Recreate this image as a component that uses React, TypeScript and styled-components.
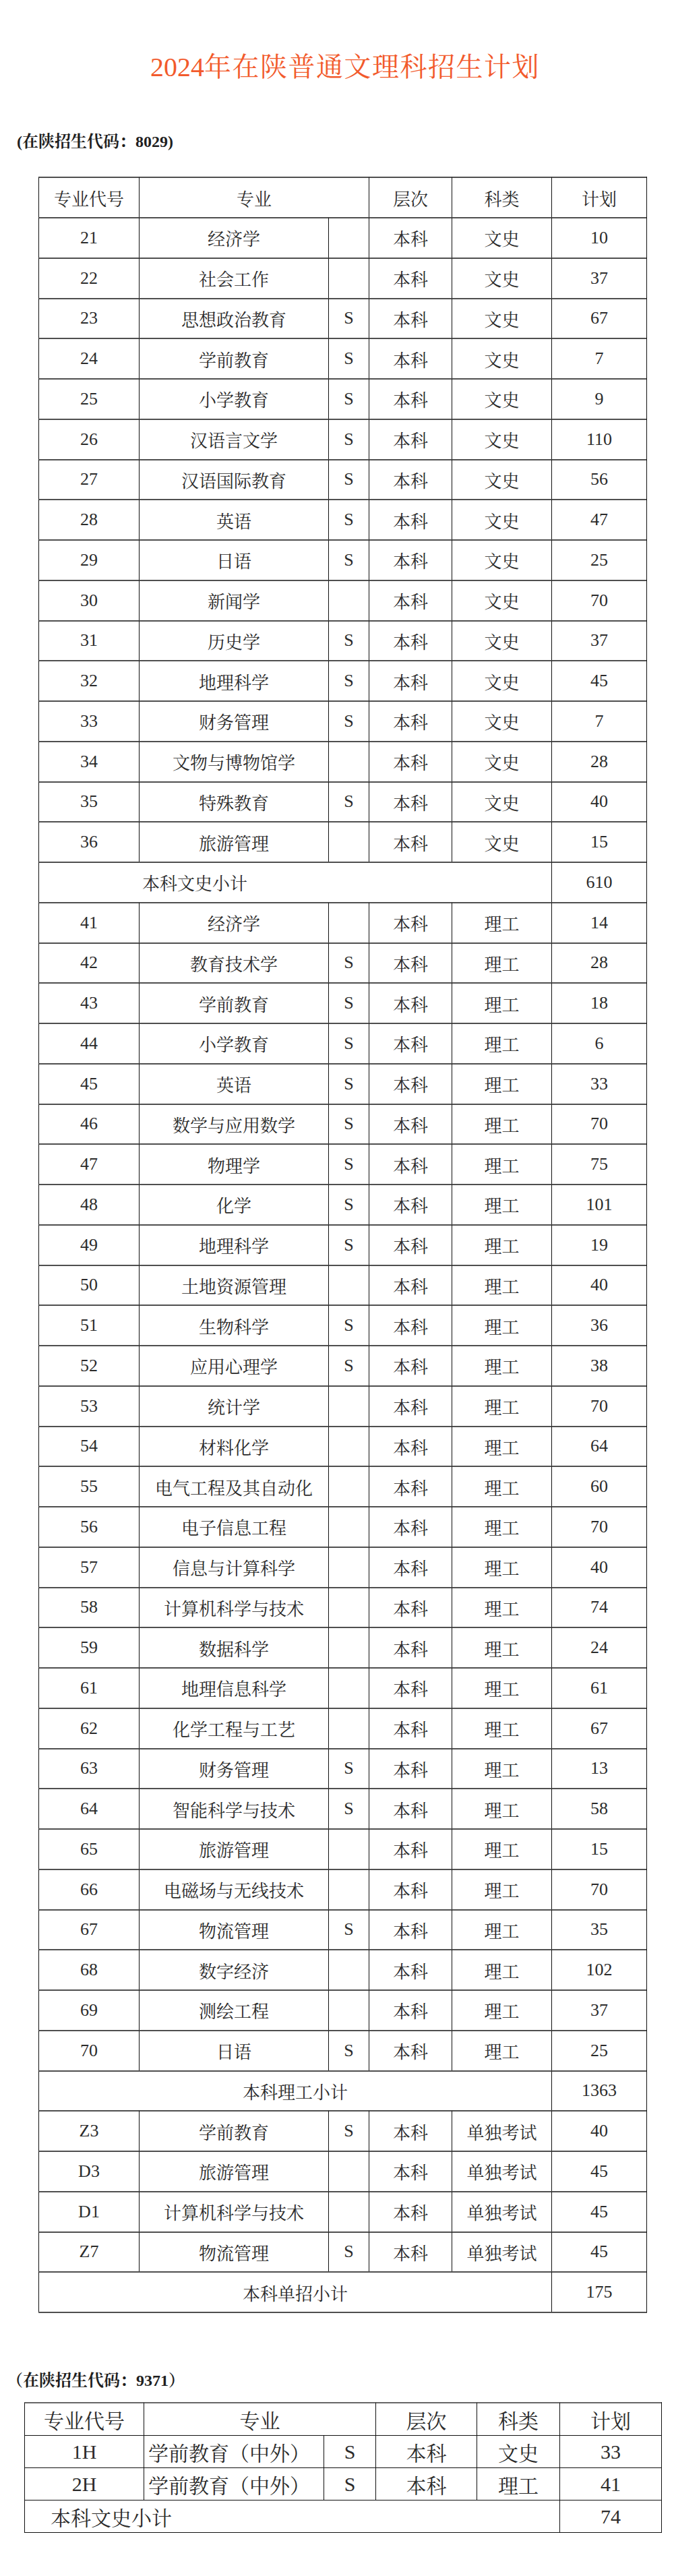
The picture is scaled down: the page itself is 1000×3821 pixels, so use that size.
import React from 'react';
import styled, { createGlobalStyle } from 'styled-components';

const GlobalStyle = createGlobalStyle`
  html, body {
    margin: 0;
    padding: 0;
    background: #ffffff;
  }
  body {
    font-family: "Liberation Serif", "Noto Serif CJK SC", "Noto Sans CJK SC", serif;
    color: #2b2b2b;
  }
`;

const Page = styled.main`
  display: flex;
  flex-direction: column;
  align-items: flex-start;
  width: 1000px;
  min-height: 3821px;
  padding-top: 76px;
  box-sizing: border-box;
`;

const Title = styled.h1`
  align-self: stretch;
  margin: 0;
  padding-left: 24px;
  height: 48px;
  font-size: 40px;
  font-weight: 400;
  line-height: 48px;
  text-align: center;
  white-space: nowrap;
  color: #f25a2c;
`;

const TitleWords = styled.span`
  letter-spacing: 1.5px;
`;

const Caption = styled.p`
  margin: 0;
  font-size: 24px;
  font-weight: 700;
  line-height: 30px;
  white-space: nowrap;
  color: #1f1f1f;
`;

const MainCaption = styled(Caption)`
  margin: 71px 0 0 25px;
`;

const SinoCaption = styled(Caption)`
  margin: 85px 0 0 10px;
`;

const Sheet = styled.div`
  display: grid;
  width: max-content;
  border-right: 1px solid #111;
  color: #2b2b2b;
`;

const LINE1 = '2px solid #4f4f4f';
const LINE2_TOP = '2px solid #666666';
const LINE2 = '1px solid #111111';

const MainSheet = styled(Sheet)`
  grid-template-columns: 149px 281px 60px 123px 148px 141px;
  grid-template-rows: 60px;
  grid-auto-rows: 59.75px;
  margin: 37px 0 0 57px;
  border-bottom: ${LINE1};
  font-size: 26px;
`;

const SinoSheet = styled(Sheet)`
  grid-template-columns: 177px 267px 77px 150px 123px 151px;
  grid-template-rows: 49px;
  grid-auto-rows: 48px;
  margin: 17px 0 0 36px;
  border-bottom: ${LINE2};
  font-size: 30px;
`;

const Cell = styled.div<{ $span?: number; $line: string; $start?: boolean; $pad?: number }>`
  grid-column: span ${(p) => p.$span ?? 1};
  display: flex;
  align-items: center;
  justify-content: ${(p) => (p.$start ? 'flex-start' : 'center')};
  padding-left: ${(p) => p.$pad ?? 0}px;
  box-sizing: border-box;
  border-left: 1px solid #111;
  border-top: ${(p) => p.$line};
  white-space: nowrap;
`;

type Row = [string, string, string, string];

const wenshi: Row[] = [
  ['21', '经济学', '', '10'],
  ['22', '社会工作', '', '37'],
  ['23', '思想政治教育', 'S', '67'],
  ['24', '学前教育', 'S', '7'],
  ['25', '小学教育', 'S', '9'],
  ['26', '汉语言文学', 'S', '110'],
  ['27', '汉语国际教育', 'S', '56'],
  ['28', '英语', 'S', '47'],
  ['29', '日语', 'S', '25'],
  ['30', '新闻学', '', '70'],
  ['31', '历史学', 'S', '37'],
  ['32', '地理科学', 'S', '45'],
  ['33', '财务管理', 'S', '7'],
  ['34', '文物与博物馆学', '', '28'],
  ['35', '特殊教育', 'S', '40'],
  ['36', '旅游管理', '', '15'],
];

const ligong: Row[] = [
  ['41', '经济学', '', '14'],
  ['42', '教育技术学', 'S', '28'],
  ['43', '学前教育', 'S', '18'],
  ['44', '小学教育', 'S', '6'],
  ['45', '英语', 'S', '33'],
  ['46', '数学与应用数学', 'S', '70'],
  ['47', '物理学', 'S', '75'],
  ['48', '化学', 'S', '101'],
  ['49', '地理科学', 'S', '19'],
  ['50', '土地资源管理', '', '40'],
  ['51', '生物科学', 'S', '36'],
  ['52', '应用心理学', 'S', '38'],
  ['53', '统计学', '', '70'],
  ['54', '材料化学', '', '64'],
  ['55', '电气工程及其自动化', '', '60'],
  ['56', '电子信息工程', '', '70'],
  ['57', '信息与计算科学', '', '40'],
  ['58', '计算机科学与技术', '', '74'],
  ['59', '数据科学', '', '24'],
  ['61', '地理信息科学', '', '61'],
  ['62', '化学工程与工艺', '', '67'],
  ['63', '财务管理', 'S', '13'],
  ['64', '智能科学与技术', 'S', '58'],
  ['65', '旅游管理', '', '15'],
  ['66', '电磁场与无线技术', '', '70'],
  ['67', '物流管理', 'S', '35'],
  ['68', '数字经济', '', '102'],
  ['69', '测绘工程', '', '37'],
  ['70', '日语', 'S', '25'],
];

const danzhao: Row[] = [
  ['Z3', '学前教育', 'S', '40'],
  ['D3', '旅游管理', '', '45'],
  ['D1', '计算机科学与技术', '', '45'],
  ['Z7', '物流管理', 'S', '45'],
];

function PlanRows({ rows, kind }: { rows: Row[]; kind: string }) {
  return (
    <>
      {rows.map(([code, name, s, plan]) => (
        <React.Fragment key={code}>
          <Cell $line={LINE1}>{code}</Cell>
          <Cell $line={LINE1}>{name}</Cell>
          <Cell $line={LINE1}>{s}</Cell>
          <Cell $line={LINE1}>本科</Cell>
          <Cell $line={LINE1}>{kind}</Cell>
          <Cell $line={LINE1}>{plan}</Cell>
        </React.Fragment>
      ))}
    </>
  );
}

const sino: [string, string, string][] = [
  ['1H', '文史', '33'],
  ['2H', '理工', '41'],
];

export default function App() {
  return (
    <>
      <GlobalStyle />
      <Page>
        <Title>
          2024<TitleWords>年在陕普通文理科招生计划</TitleWords>
        </Title>

        <MainCaption>(在陕招生代码：8029)</MainCaption>

        <MainSheet>
          <Cell $line={LINE1}>专业代号</Cell>
          <Cell $line={LINE1} $span={2}>专业</Cell>
          <Cell $line={LINE1}>层次</Cell>
          <Cell $line={LINE1}>科类</Cell>
          <Cell $line={LINE1}>计划</Cell>

          <PlanRows rows={wenshi} kind="文史" />
          <Cell $line={LINE1} $span={5} $start $pad={153}>本科文史小计</Cell>
          <Cell $line={LINE1}>610</Cell>

          <PlanRows rows={ligong} kind="理工" />
          <Cell $line={LINE1} $span={5}>本科理工小计</Cell>
          <Cell $line={LINE1}>1363</Cell>

          <PlanRows rows={danzhao} kind="单独考试" />
          <Cell $line={LINE1} $span={5}>本科单招小计</Cell>
          <Cell $line={LINE1}>175</Cell>
        </MainSheet>

        <SinoCaption>（在陕招生代码：9371）</SinoCaption>

        <SinoSheet>
          <Cell $line={LINE2_TOP}>专业代号</Cell>
          <Cell $line={LINE2_TOP} $span={2}>专业</Cell>
          <Cell $line={LINE2_TOP}>层次</Cell>
          <Cell $line={LINE2_TOP}>科类</Cell>
          <Cell $line={LINE2_TOP}>计划</Cell>

          {sino.map(([code, kind, plan]) => (
            <React.Fragment key={code}>
              <Cell $line={LINE2}>{code}</Cell>
              <Cell $line={LINE2} $start $pad={6}>学前教育（中外）</Cell>
              <Cell $line={LINE2}>S</Cell>
              <Cell $line={LINE2}>本科</Cell>
              <Cell $line={LINE2}>{kind}</Cell>
              <Cell $line={LINE2}>{plan}</Cell>
            </React.Fragment>
          ))}

          <Cell $line={LINE2} $span={5} $start $pad={38}>本科文史小计</Cell>
          <Cell $line={LINE2}>74</Cell>
        </SinoSheet>
      </Page>
    </>
  );
}
